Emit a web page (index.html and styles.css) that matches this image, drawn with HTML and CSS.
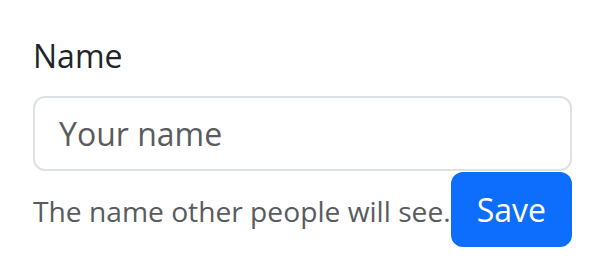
FILE: index.html
```html
<!DOCTYPE html>
<html lang="en">
<head>
<meta charset="utf-8">
<link rel="stylesheet" href="styles.css">
</head>
<body>
<form class="form">
  <label class="form-label" for="name">Name</label>
  <input class="form-control" id="name" type="text" placeholder="Your name">
  <div class="form-row">
    <div class="form-text">The name other people will see.</div>
    <button class="btn" type="button">Save</button>
  </div>
</form>
</body>
</html>
```
FILE: styles.css
```css
html, body {
  margin: 0;
  padding: 0;
  background: #ffffff;
}
body {
  font-family: "Open Sans", "Noto Sans", sans-serif;
  color: #212529;
}
.form {
  padding: 32px 30px 0 33px;
  display: flex;
  flex-direction: column;
}
.form-label {
  font-size: 32px;
  line-height: 48px;
  margin-bottom: 16px;
  color: #212529;
}
.form-control {
  box-sizing: border-box;
  width: 100%;
  height: 75px;
  margin: 0;
  padding: 12px 24px;
  font-family: inherit;
  font-size: 32px;
  line-height: 48px;
  color: #212529;
  background: #fff;
  border: 2px solid #dee2e6;
  border-radius: 12px;
  outline: none;
}
.form-control::placeholder {
  color: #595c5f;
  opacity: 1;
}
.form-row {
  display: flex;
  justify-content: space-between;
  align-items: baseline;
  margin-top: 1px;
}
.form-text {
  font-size: 28.2px;
  line-height: 42px;
  color: #595c5f;
}
.btn {
  box-sizing: border-box;
  height: 75px;
  margin: 0;
  padding: 12px 24px;
  font-family: inherit;
  font-size: 32px;
  line-height: 48px;
  color: #ffffff;
  background: #0d6efd;
  border: 2px solid #0d6efd;
  border-radius: 12px;
  cursor: pointer;
}
```
